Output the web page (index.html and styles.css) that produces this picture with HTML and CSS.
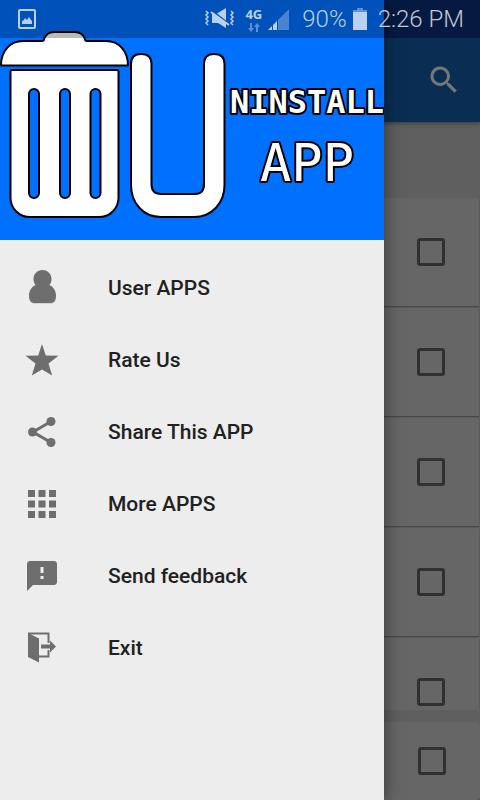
FILE: index.html
```
<!DOCTYPE html>
<html lang="en">
<head>
<meta charset="utf-8">
<meta name="viewport" content="width=device-width, initial-scale=1">
<title>Uninstall App</title>
<link rel="stylesheet" href="styles.css">
</head>
<body>
<div class="screen">
  <main class="page">
    <header class="toolbar">
      <button class="search" aria-label="Search">
        <svg width="36" height="36" viewBox="0 0 24 24"><path fill="currentColor" d="M15.5 14h-.8l-.3-.3A6.5 6.5 0 1 0 13.7 14.4l.3.3v.8l5 5 1.5-1.5zm-6 0a4.500 4.500 0 1 1 0-9 4.500 4.500 0 0 1 0 9z"/></svg>
      </button>
    </header>
    <div class="list">
      <label class="card"><input type="checkbox" aria-label="Select app 1"></label>
      <label class="card"><input type="checkbox" aria-label="Select app 2"></label>
      <label class="card"><input type="checkbox" aria-label="Select app 3"></label>
      <label class="card"><input type="checkbox" aria-label="Select app 4"></label>
      <label class="card"><input type="checkbox" aria-label="Select app 5"></label>
    </div>
    <label class="card all"><input type="checkbox" aria-label="Select all"></label>
  </main>

  <aside class="drawer">
    <div class="banner">
      <svg class="logo" viewBox="0 0 384 240" role="img" aria-label="Uninstall App">
        <g fill="#fff" stroke="#000" stroke-width="2" stroke-linejoin="round">
          <path d="M1 65.500C1 51 10 41 23 41H42Q44 41 44 39C46 34 49 32 54 32H75C80 32 83 34 85 39Q85 41 87 41H106C119 41 128 51 128 65.500Z"/>
          <path d="M12 70H117Q118.500 70 118.500 72V198C118.500 208 110 217 100 217H29C19 217 10.500 208 10.500 198V72Q10.500 70 12 70Z"/>
          <g fill="#0070ff">
            <rect x="29" y="89" width="10" height="109" rx="5"/>
            <rect x="60" y="89" width="10" height="109" rx="5"/>
            <rect x="90.500" y="89" width="10" height="109" rx="5"/>
          </g>
          <path d="M131 64C131 57 135 54 141 54S151.500 57 151.500 64V184Q151.500 194 161 194H195Q204 194 204 184V64C204 57 208 54 214 54S224.500 57 224.500 64V185C224.500 203 212 217 194 217H161C143 217 131 203 131 185Z"/>
        </g>
        <text class="word small" x="307" y="113">NINSTALL</text>
        <text class="word" x="307" y="181">APP</text>
      </svg>
    </div>
    <nav class="menu">
      <a href="#user"><svg viewBox="0 0 36 36"><path fill="#d2d2d2" d="M5 27Q5 34 10 34H27Q32 34 32 27Z"/><path d="M18.500 0c-5.300 0-9 4-9 9 0 2.500.8 4.500 2 6-4 2-6.500 6-6.500 10.500 0 5 2 7.500 6 7.500h15c4 0 6-2.500 6-7.500 0-4.500-2.500-8.500-6.500-10.500 1.200-1.500 2-3.500 2-6 0-5-3.700-9-9-9z"/></svg>User APPS</a>
      <a href="#rate"><svg viewBox="0 0 36 36"><path d="M18 2l3.800 11.500 12.700.3-10 7.600 3.700 12L18 27.500l-10.200 5.900 3.700-12-10-7.600 12.700-.3z"/></svg>Rate Us</a>
      <a href="#share"><svg viewBox="0 0 36 36"><path d="M27 7.500L9 18l18 10.500" fill="none" stroke="currentColor" stroke-width="3"/><circle cx="27" cy="7.500" r="4.500"/><circle cx="8.500" cy="18" r="4.500"/><circle cx="27" cy="28.500" r="4.500"/></svg>Share This APP</a>
      <a href="#more"><svg viewBox="0 0 36 36"><path d="M4 4h7v7H4zM14.500 4h7v7h-7zM25 4h7v7h-7zM4 14.500h7v7H4zM14.500 14.500h7v7h-7zM25 14.500h7v7h-7zM4 25h7v7H4zM14.500 25h7v7h-7zM25 25h7v7h-7z"/></svg>More APPS</a>
      <a href="#feedback"><svg viewBox="0 0 36 36"><path fill-rule="evenodd" d="M6 3h24c1.700 0 3 1.300 3 3v18c0 1.700-1.300 3-3 3H9l-6 6V6c0-1.700 1.300-3 3-3zm10.500 6v6h3V9zm0 9v3h3v-3z"/></svg>Send feedback</a>
      <a href="#exit"><svg viewBox="0 0 36 36"><path d="M4 3l11 5.500v24L4 27z"/><path d="M4 3.500h20.500V13M24.500 20v6.500H15" fill="none" stroke="currentColor" stroke-width="2"/><path d="M17 14.500h9v-4l6 6-6 6v-4h-9z"/></svg>Exit</a>
    </nav>
  </aside>

  <div class="status">
    <svg class="picture" width="18" height="20" viewBox="0 0 18 20"><rect x="1" y="1" width="16" height="18" rx="1" fill="none" stroke="currentColor" stroke-width="2"/><path fill="currentColor" d="M4 15v-3l2-1 1-2 2 2 2-3 2 3 1 1v3z"/></svg>
    <svg class="mute" width="30" height="22" viewBox="0 0 30 22"><path fill="currentColor" d="M12 5.500L21 0v12.500zM7 6h2.500L21 15v5l-8-5H7z"/><path d="M6 4l18 13" stroke="currentColor" stroke-width="2"/><path d="M1 3l2 2-2 2 2 2-2 2 2 2-2 2 2 2M26 3l2 2-2 2 2 2-2 2 2 2-2 2 2 2" fill="none" stroke="currentColor" stroke-width="1.500"/></svg>
    <span class="network">4G<svg width="12" height="9" viewBox="0 0 12 9"><path fill="currentColor" opacity=".5" d="M2 0h2v5h2L3 9 0 5h2zM8 9h2V4h2L9 0 6 4h2z"/></svg></span>
    <svg class="signal" width="21" height="21" viewBox="0 0 21 21"><path fill="currentColor" opacity=".4" d="M10 11L21 0v21H10z"/><path fill="currentColor" d="M0 21l4-4v4zM5 16l4-4v9H5z"/></svg>
    <span class="percent">90%</span>
    <svg class="battery" width="14" height="22" viewBox="0 0 14 22"><path fill="currentColor" opacity=".5" d="M4 0h6v2h4v2H0V2h4z"/><path fill="currentColor" d="M0 4h14v18H0z"/></svg>
    <time>2:26 PM</time>
  </div>
</div>
</body>
</html>
```
FILE: styles.css
```
* {
  box-sizing: border-box;
}

body {
  margin: 0;
  font-family: Roboto, "Liberation Sans", sans-serif;
  background: #5f5f5f;
}

.screen {
  position: relative;
  height: 100vh;
  overflow: hidden;
}

/* Dimmed page behind the drawer */
.page {
  display: flex;
  flex-direction: column;
  height: 100%;
}

.toolbar {
  display: flex;
  flex: none;
  align-items: center;
  justify-content: flex-end;
  height: 122px;
  padding: 38px 18px 0;
  background: linear-gradient(#08235a 38px, #0a2e53 38px);
  box-shadow: 0 2px 4px rgba(0, 0, 0, .3);
}

.search {
  display: flex;
  padding: 0;
  border: 0;
  background: none;
  color: #777;
}

.list {
  flex: 1;
  min-height: 0;
  margin-top: 76px;
  overflow: hidden;
}

.card {
  display: flex;
  align-items: center;
  justify-content: flex-end;
  height: 108px;
  margin: 0 1px 2px 0;
  padding-right: 34px;
  background: #666;
  box-shadow: 0 1px 1px #484848;
}

.card.all {
  flex: none;
  height: 78px;
  margin: 12px 0 0;
  border-radius: 4px;
}

.card input {
  appearance: none;
  width: 28px;
  height: 28px;
  margin: 0;
  border: 3px solid #303030;
  border-radius: 3px;
}

/* Drawer */
.drawer {
  position: absolute;
  top: 0;
  left: 0;
  width: 80%;
  height: 100%;
  background: #ededed;
  box-shadow: 0 0 16px rgba(0, 0, 0, .5);
}

.banner {
  background: #0070ff;
}

.logo {
  display: block;
  width: 100%;
}

.word {
  font-family: "DejaVu Sans Mono", monospace;
  font-size: 52px;
  font-weight: normal;
  text-anchor: middle;
  fill: #fff;
  stroke: #000;
  stroke-width: 4px;
  stroke-linejoin: round;
  paint-order: stroke;
}

.word.small {
  font-size: 32px;
  font-weight: bold;
}

.menu {
  display: flex;
  flex-direction: column;
  padding-top: 12px;
}

.menu a {
  display: flex;
  align-items: center;
  gap: 48px;
  height: 72px;
  padding-left: 24px;
  color: #212121;
  font-size: 21px;
  font-weight: 500;
  text-decoration: none;
}

.menu svg {
  width: 36px;
  height: 36px;
  color: #6e6e6e;
  fill: currentColor;
}

/* System status bar */
.status {
  position: absolute;
  top: 0;
  left: 0;
  display: flex;
  align-items: center;
  width: 100%;
  height: 38px;
  padding: 0 16px 0 18px;
  background: rgba(0, 0, 0, .27);
  color: #bad0ef;
  font-size: 24px;
  font-weight: 300;
}

.mute {
  margin-left: auto;
}

.network {
  display: flex;
  flex-direction: column;
  align-items: center;
  gap: 2px;
  margin-left: 10px;
  font: bold 13px/14px "Open Sans", sans-serif;
}

.signal {
  margin-left: 6px;
}

.percent {
  margin-left: 13px;
}

.battery {
  margin-left: 6px;
}

.status time {
  margin-left: 11px;
  color: #c2c8d4;
}
```
